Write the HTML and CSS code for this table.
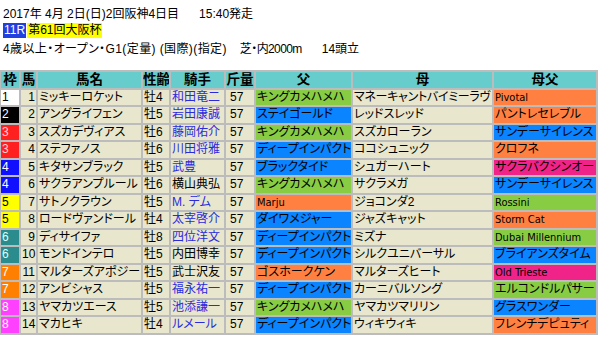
FILE: index.html
```html
<!DOCTYPE html>
<html lang="ja">
<head>
<meta charset="utf-8">
<link rel="stylesheet" href="styles.css">
</head>
<body>
<div class="info">
  <div class="line"><span>2017年 4月 2日(日)2回阪神4日目</span><span class="time">15:40発走</span></div>
  <div class="line"><span class="rno">11R</span><span class="rname">第61回大阪杯</span></div>
  <div class="line"><span class="cond">4歳以上・オープン・G1(定量) (国際)(指定)</span><span class="course">芝・内2000m</span><span class="heads">14頭立</span></div>
</div>
<table class="tbl">
  <colgroup>
    <col class="c-waku"><col class="c-num"><col class="c-name"><col class="c-age"><col class="c-jk"><col class="c-wt"><col class="c-sire"><col class="c-dam"><col class="c-bms">
  </colgroup>
  <thead>
    <tr><th>枠</th><th>馬</th><th>馬名</th><th>性齢</th><th>騎手</th><th>斤量</th><th>父</th><th>母</th><th>母父</th></tr>
  </thead>
  <tbody>
    <tr><td class="w1">1</td><td class="num">1</td><td class="nm">ミッキーロケット</td><td>牡4</td><td class="jk">和田竜二</td><td class="wt">57</td><td class="g">キングカメハメハ</td><td class="tight">マネーキャントバイミーラヴ</td><td class="o lat">Pivotal</td></tr>
    <tr><td class="w2">2</td><td class="num">2</td><td class="nm">アングライフェン</td><td>牡5</td><td class="jk">岩田康誠</td><td class="wt">57</td><td class="b">ステイゴールド</td><td>レッドスレッド</td><td class="o">パントレセレブル</td></tr>
    <tr><td class="w3">3</td><td class="num">3</td><td class="nm">スズカデヴィアス</td><td>牡6</td><td class="jk">藤岡佑介</td><td class="wt">57</td><td class="g">キングカメハメハ</td><td>スズカローラン</td><td class="b">サンデーサイレンス</td></tr>
    <tr><td class="w3">3</td><td class="num">4</td><td class="nm">ステファノス</td><td>牡6</td><td class="jk">川田将雅</td><td class="wt">57</td><td class="b">ディープインパクト</td><td>ココシュニック</td><td class="o">クロフネ</td></tr>
    <tr><td class="w4">4</td><td class="num">5</td><td class="nm">キタサンブラック</td><td>牡5</td><td class="jk">武豊</td><td class="wt">57</td><td class="b">ブラックタイド</td><td>シュガーハート</td><td class="p">サクラバクシンオー</td></tr>
    <tr><td class="w4">4</td><td class="num">6</td><td class="nm">サクラアンプルール</td><td>牡6</td><td>横山典弘</td><td class="wt">57</td><td class="g">キングカメハメハ</td><td>サクラメガ</td><td class="b">サンデーサイレンス</td></tr>
    <tr><td class="w5">5</td><td class="num">7</td><td class="nm">サトノクラウン</td><td>牡5</td><td class="jk">M. デム</td><td class="wt">57</td><td class="o lat">Marju</td><td>ジョコンダ2</td><td class="g lat">Rossini</td></tr>
    <tr><td class="w5">5</td><td class="num">8</td><td class="nm">ロードヴァンドール</td><td>牡4</td><td class="jk">太宰啓介</td><td class="wt">57</td><td class="b">ダイワメジャー</td><td>ジャズキャット</td><td class="o lat">Storm Cat</td></tr>
    <tr><td class="w6">6</td><td class="num">9</td><td class="nm">ディサイファ</td><td>牡8</td><td class="jk">四位洋文</td><td class="wt">57</td><td class="b">ディープインパクト</td><td>ミズナ</td><td class="g lat">Dubai Millennium</td></tr>
    <tr><td class="w6">6</td><td class="num">10</td><td class="nm">モンドインテロ</td><td>牡5</td><td>内田博幸</td><td class="wt">57</td><td class="b">ディープインパクト</td><td>シルクユニバーサル</td><td class="b">ブライアンズタイム</td></tr>
    <tr><td class="w7">7</td><td class="num">11</td><td class="nm">マルターズアポジー</td><td>牡5</td><td>武士沢友</td><td class="wt">57</td><td class="o">ゴスホークケン</td><td>マルターズヒート</td><td class="p lat">Old Trieste</td></tr>
    <tr><td class="w7">7</td><td class="num">12</td><td class="nm">アンビシャス</td><td>牡5</td><td class="jk">福永祐一</td><td class="wt">57</td><td class="b">ディープインパクト</td><td>カーニバルソング</td><td class="g">エルコンドルパサー</td></tr>
    <tr><td class="w8">8</td><td class="num">13</td><td class="nm">ヤマカツエース</td><td>牡5</td><td class="jk">池添謙一</td><td class="wt">57</td><td class="g">キングカメハメハ</td><td>ヤマカツマリリン</td><td class="b">グラスワンダー</td></tr>
    <tr><td class="w8">8</td><td class="num">14</td><td class="nm">マカヒキ</td><td>牡4</td><td class="jk">ルメール</td><td class="wt">57</td><td class="b">ディープインパクト</td><td>ウィキウィキ</td><td class="o">フレンチデピュティ</td></tr>
  </tbody>
</table>
</body>
</html>
```

FILE: styles.css
```css
html, body {
  margin: 0;
  padding: 0;
  background: #ffffff;
}
body {
  font-family: "Liberation Sans", "Noto Sans CJK JP", sans-serif;
  font-size: 12px;
  color: #000;
}
.info {
  padding: 4px 0 0 3px;
  height: 70px;
  box-sizing: border-box;
  font-feature-settings: "palt";
}
.line {
  display: flex;
  align-items: center;
  height: 17.5px;
  white-space: nowrap;
}
.cond { letter-spacing: 0.4px; }
.time { margin-left: 20px; }
.course { margin-left: 13px; letter-spacing: -0.6px; }
.heads { margin-left: 20px; }
.rno {
  background: #2040e0;
  color: #fff;
  padding: 0 1px;
  line-height: 15px;
}
.rname {
  background: #ffff00;
  margin-left: 1px;
  padding: 0 1px;
  line-height: 15px;
}
.tbl {
  border-collapse: separate;
  border-spacing: 2px;
  background: #bcbcbc;
  table-layout: fixed;
  width: 598px;
  margin: 0 0 0 -1px;
  font-feature-settings: "palt";
  font-size: 12px;
}
.c-waku { width: 18px; }
.c-num { width: 15px; }
.c-name { width: 103px; }
.c-age { width: 26px; }
.c-jk { width: 53px; }
.c-wt { width: 28px; }
.c-sire { width: 95px; }
.c-dam { width: 139px; }
.c-bms { width: 102px; }
.tbl th, .tbl td {
  height: 15.5px;
  padding: 0 1px;
  white-space: nowrap;
  overflow: hidden;
  line-height: 15px;
  text-align: left;
}
.tbl th {
  background: #66cccc;
  font-weight: bold;
  font-size: 13.5px;
  text-align: center;
  padding: 0;
}
.tbl td { background: #e8e6cc; }
.tbl td.num { text-align: right; }
.tbl td.nm { letter-spacing: 0; }
.tbl td.wt { padding-left: 4px; }
.tbl td.tight { letter-spacing: -0.3px; }
.tbl td.jk { color: #2a2ae0; }
.tbl td.lat { font-family: "DejaVu Sans Condensed", "DejaVu Sans", sans-serif; font-stretch: condensed; font-size: 11px; }
.tbl td.g { background: #88cc44; }
.tbl td.b { background: #0a84ff; }
.tbl td.o { background: #ff8040; }
.tbl td.p { background: #f02488; }
.tbl td.w1 { background: #ffffff; color: #000; }
.tbl td.w2 { background: #000000; color: #fff; }
.tbl td.w3 { background: #ff2020; color: #ffd0d0; }
.tbl td.w4 { background: #1010ff; color: #fff; }
.tbl td.w5 { background: #ffff00; color: #000; }
.tbl td.w6 { background: #2a8c8c; color: #dff; }
.tbl td.w7 { background: #ff8000; color: #fff; }
.tbl td.w8 { background: #ff40ff; color: #fff; }
```
